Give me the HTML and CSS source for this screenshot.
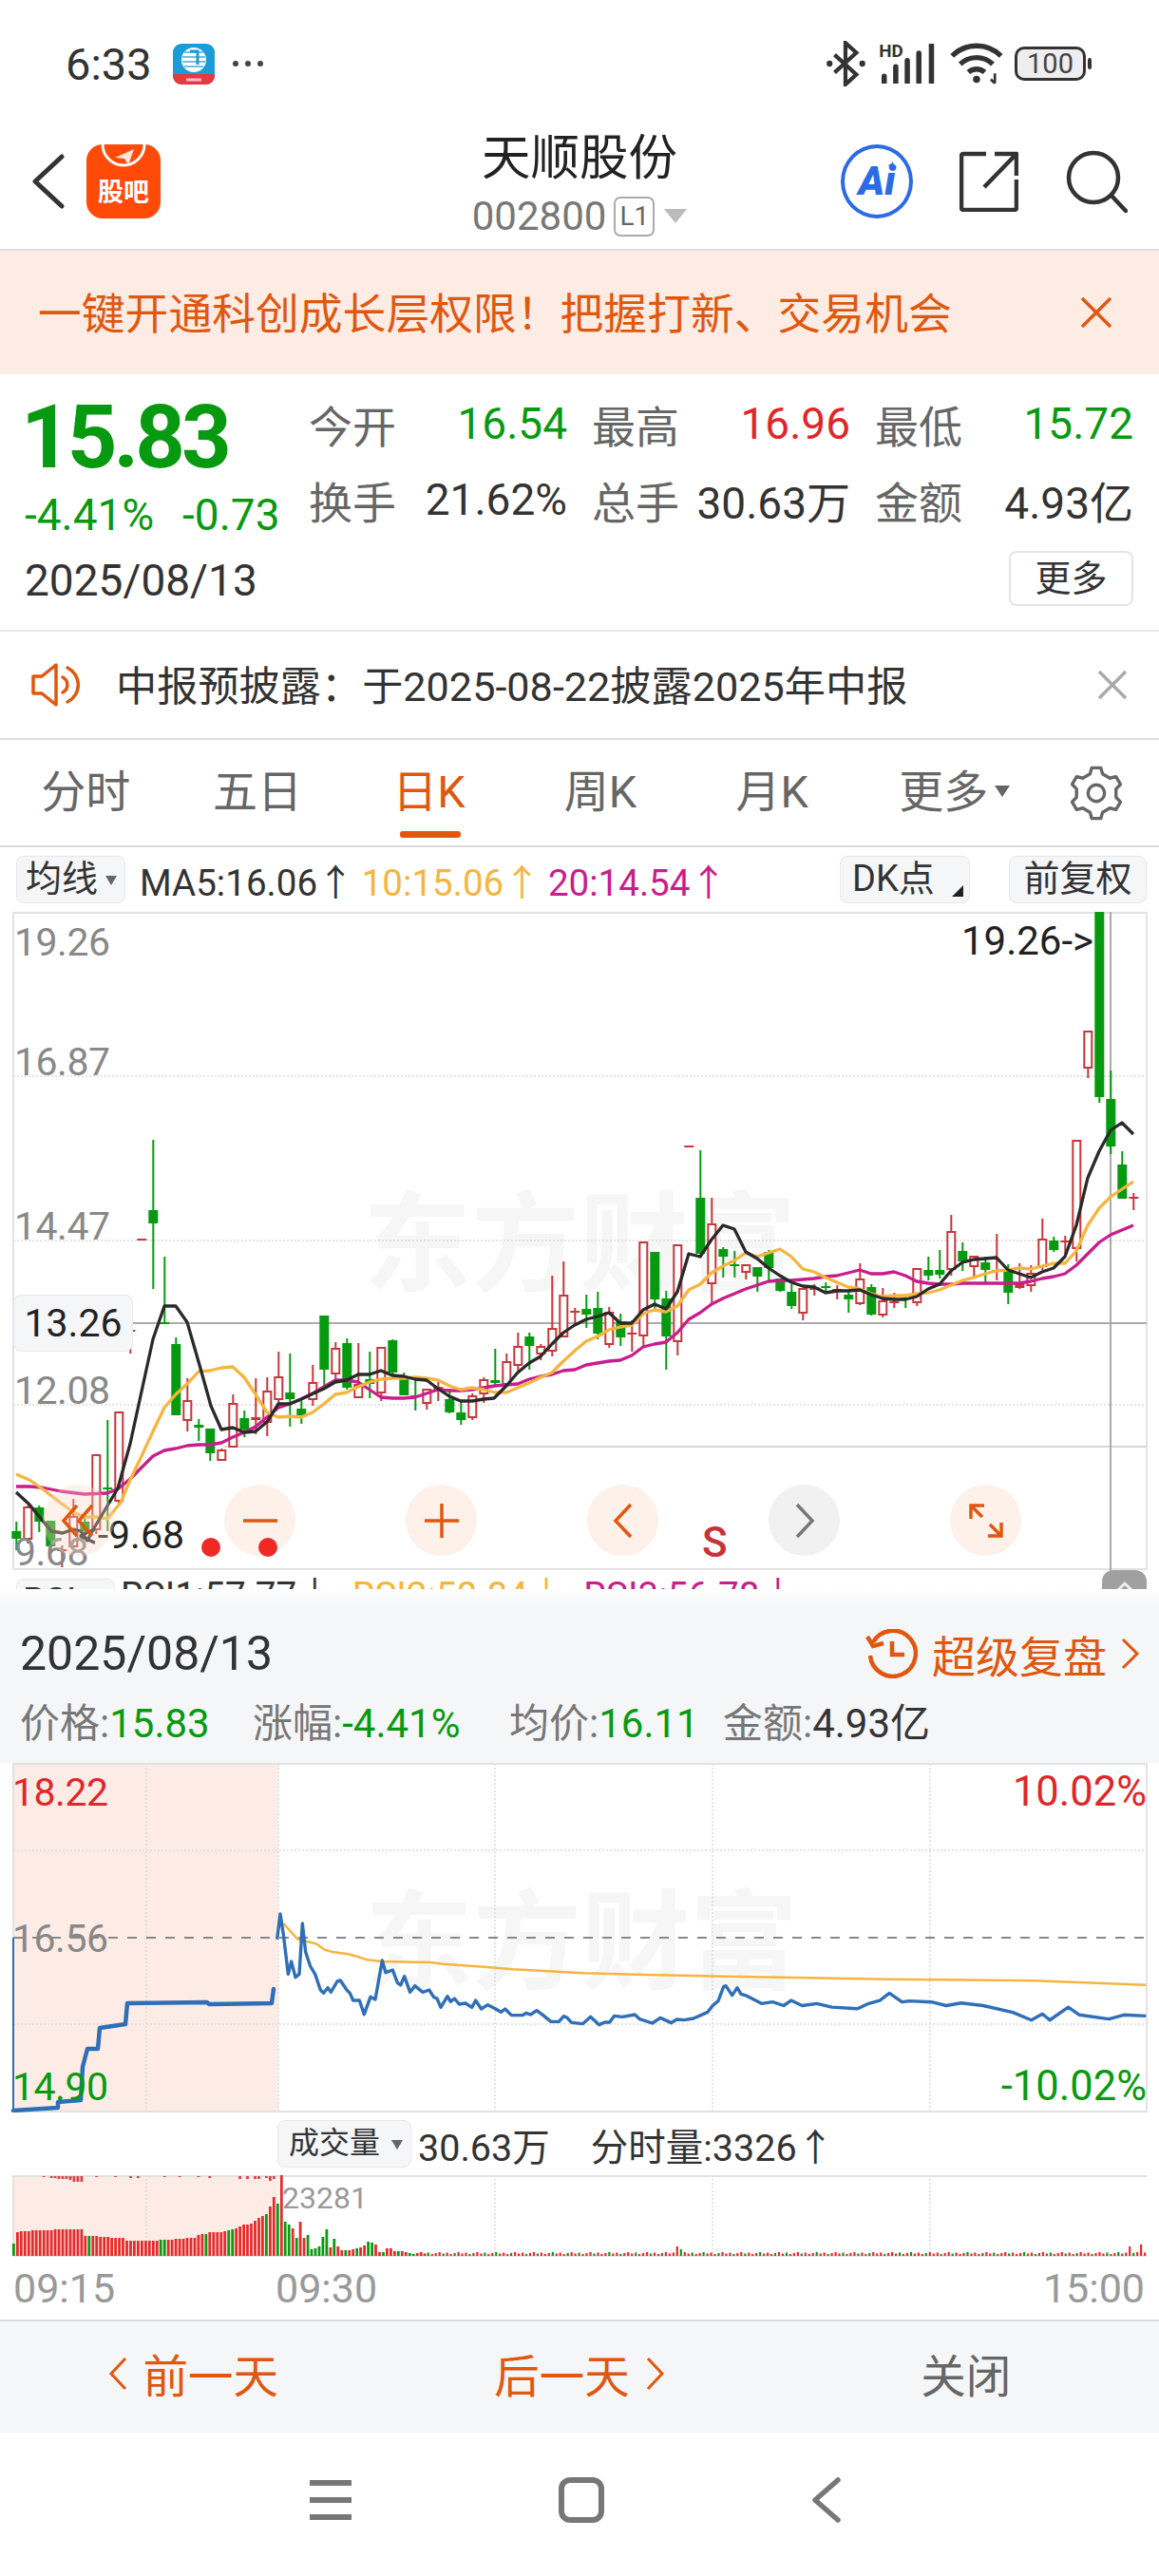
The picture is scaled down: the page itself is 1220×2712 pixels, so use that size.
FILE: index.html
```html
<!DOCTYPE html>
<html lang="zh-CN">
  <head>
    <meta charset="UTF-8" />
    <meta name="viewport" content="width=device-width, initial-scale=1.0" />
    <title>天顺股份 002800</title>
    <link rel="stylesheet" href="styles.css">
  </head>
  <body>
    <!-- Status bar -->
    <div class="status-bar">
      <span class="clock">6:33</span>
      <svg class="app-icon" width="44" height="43" viewBox="0 0 44 43">
        <rect width="44" height="43" rx="9" fill="#1b9bd8" />
        <path d="M0 32h44v2a9 9 0 0 1-9 9H9a9 9 0 0 1-9-9z" fill="#e8393f" />
        <ellipse cx="22" cy="17" rx="13" ry="13" fill="#fff" />
        <path d="M12 9h20M10 14h24M10 19h24M12 24h20" stroke="#6cc0e8" stroke-width="2" />
        <path d="M18 8h8v14" fill="none" stroke="#1b9bd8" stroke-width="3" />
        <path d="M14 38h16" stroke="#fbd" stroke-width="3" />
      </svg>
      <span class="more-dots"><i></i><i></i><i></i></span>
      <div class="status-right">
        <svg class="sb-bt" width="46" height="48" viewBox="0 0 44 46" fill="none" stroke="#333" stroke-width="4">
          <path d="M10 14l22 20-11 10V2l11 10-22 20" />
          <circle cx="5" cy="23" r="3" fill="#333" stroke="none" />
          <circle cx="38" cy="23" r="3" fill="#333" stroke="none" />
        </svg>
        <svg class="sb-signal" width="59" height="42" viewBox="0 0 53 38">
          <text x="0" y="13" class="hd-text">HD</text>
          <path d="M5 37v-6M16 37V22M27 37V16M38 37V9M50 37V1" stroke="#333" stroke-width="5" stroke-linecap="round" />
        </svg>
        <svg class="sb-wifi" width="60" height="45" viewBox="0 0 56 42" fill="none" stroke="#333" stroke-width="5">
          <path d="M3 13a34 34 0 0 1 48 0M11 21a23 23 0 0 1 32 0M19 29a12 12 0 0 1 16 0" />
          <circle cx="27" cy="36" r="3.5" fill="#333" stroke="none" />
          <path d="M45 30v10M41 36l4 4" stroke-width="2.5" />
        </svg>
        <div class="battery"><span>100</span></div>
      </div>
    </div>

    <!-- Top nav -->
    <div class="top-nav">
      <div class="nav-left">
        <svg width="36" height="58" viewBox="0 0 36 58" fill="none" stroke="#333" stroke-width="5" stroke-linecap="round" stroke-linejoin="round">
          <path d="M32 3L4 29l28 26" />
        </svg>
        <div class="guba">
          <svg width="78" height="34" viewBox="0 0 78 34">
            <path d="M17 0a22 22 0 0 0 44 0" fill="none" stroke="#fff" stroke-width="3" />
            <path d="M30 14l20-9-6 17-4-7z" fill="#fff" opacity=".85" />
          </svg>
          <span>股吧</span>
        </div>
      </div>
      <div class="nav-title">
        <div class="stock-name">天顺股份</div>
        <div class="stock-code">
          <span>002800</span><span class="level-badge">L1</span><i class="caret-gray"></i>
        </div>
      </div>
      <div class="nav-right">
        <div class="ai-btn">Ai<i>✦</i></div>
        <svg width="62" height="64" viewBox="0 0 62 64" fill="none" stroke="#333" stroke-width="4.5" stroke-linejoin="round">
          <path d="M28 3H4a2 2 0 0 0-2 2v55a2 2 0 0 0 2 2h54a2 2 0 0 0 2-2V30" />
          <path d="M26 38L59 4M37 3h23v23" />
        </svg>
        <svg width="66" height="66" viewBox="0 0 66 66" fill="none" stroke="#333" stroke-width="4.5" stroke-linecap="round">
          <circle cx="30" cy="29" r="26" />
          <path d="M49 48l15 16" />
        </svg>
      </div>
    </div>

    <!-- Orange promo banner -->
    <div class="promo">
      <span>一键开通科创成长层权限！把握打新、交易机会</span>
      <svg width="34" height="34" viewBox="0 0 34 34" stroke="#e0570f" stroke-width="3.5" fill="none"><path d="M2 2l30 30M32 2L2 32" /></svg>
    </div>

    <!-- Quote summary -->
    <div class="quote">
      <div class="quote-left">
        <div class="price">15.83</div>
        <div class="change"><span>-4.41%</span><span>-0.73</span></div>
        <div class="quote-date">2025/08/13</div>
      </div>
      <div class="quote-right">
        <div class="stats">
          <div class="stat"><label>今开</label><b class="green">16.54</b></div>
          <div class="stat"><label>最高</label><b class="red">16.96</b></div>
          <div class="stat"><label>最低</label><b class="green">15.72</b></div>
          <div class="stat"><label>换手</label><b>21.62%</b></div>
          <div class="stat"><label>总手</label><b>30.63万</b></div>
          <div class="stat"><label>金额</label><b>4.93亿</b></div>
        </div>
        <div class="more-btn">更多</div>
      </div>
    </div>

    <!-- Notice -->
    <div class="notice">
      <svg width="54" height="46" viewBox="0 0 54 46" fill="none" stroke="#e0570f" stroke-width="3.5" stroke-linejoin="round" stroke-linecap="round">
        <path d="M2 14h9L26 2v42L11 32H2z" />
        <path d="M33 15a9 9 0 0 1 0 16M38 5a20 20 0 0 1 0 36" />
      </svg>
      <span class="notice-text">中报预披露：于2025-08-22披露2025年中报</span>
      <svg width="32" height="32" viewBox="0 0 32 32" stroke="#aaa" stroke-width="3.5" fill="none"><path d="M2 2l28 28M30 2L2 30" /></svg>
    </div>

    <!-- Period tabs -->
    <div class="tabs">
      <div class="tab">分时</div>
      <div class="tab">五日</div>
      <div class="tab active">日K</div>
      <div class="tab">周K</div>
      <div class="tab">月K</div>
      <div class="tab">更多<i class="tab-caret"></i></div>
      <svg class="gear" width="58" height="60" viewBox="0 0 60 60" fill="none" stroke="#666" stroke-width="3.5" stroke-linejoin="round">
        <path d="M25.1 2.4H34.9L36.8 9.1 44.7 13.7 51.4 12 56.3 20.4 51.5 25.4V34.6L56.3 39.6 51.4 48 44.7 46.3 36.8 50.9 34.9 57.6H25.1L23.2 50.9 15.3 46.3 8.6 48 3.7 39.6 8.5 34.6V25.4L3.7 20.4 8.6 12 15.3 13.7 23.2 9.1z" />
        <circle cx="30" cy="30" r="9" />
      </svg>
    </div>

    <!-- MA legend -->
    <div class="ma-row">
      <div class="chip ma-chip">均线<i class="chip-caret"></i></div>
      <span>MA5:16.06↑</span>
      <span class="ma10">10:15.06↑</span>
      <span class="ma20">20:14.54↑</span>
      <div class="ma-right">
        <div class="chip dk-chip">DK点<i class="corner-caret"></i></div>
        <div class="chip fq-chip">前复权</div>
      </div>
    </div>

    <!-- Daily K chart -->
    <div class="kline">
      <svg class="chart-svg" width="1220" height="713" viewBox="0 960 1220 713">
        <text x="610" y="1350" class="watermark">东方财富</text>
        <path d="M14 1133H1207M14 1306H1207M14 1479H1207" class="grid-dots" />
        <path d="M14 961H1207V1652H14z" class="frame" />
        <path d="M235 1523H1207" class="row-line" />
        <path d="M140 1393H1207M1169 960V1673" class="cross" />
        <g id="candles"></g>
        <path id="ma20" class="ma-line" stroke="#c81e8c" />
        <path id="ma10" class="ma-line" stroke="#f5b53f" />
        <path id="ma5" class="ma-line" stroke="#2a2a2a" />
        <text x="15" y="1006" class="axis-gray">19.26</text>
        <text x="15" y="1132" class="axis-gray">16.87</text>
        <text x="15" y="1305" class="axis-gray">14.47</text>
        <text x="15" y="1478" class="axis-gray">12.08</text>
        <text x="15" y="1648" class="axis-gray">9.68</text>
        <text x="1151" y="1005" class="axis-dark end peak-mark">19.26-&gt;</text>
        <text x="194" y="1630" class="axis-dark end">&lt;-9.68</text>
        <text x="739" y="1639" class="sell-mark">S</text>
      </svg>
      <div class="cross-label">13.26</div>

      <div class="chart-btns">
        <div class="round-btn"><svg width="40" height="40" viewBox="0 0 40 40" fill="none" stroke="#e0570f" stroke-width="3.5"><path d="M18 4L4 20l14 16M34 4L20 20l14 16" /></svg></div>
        <div class="round-btn"><svg width="40" height="40" viewBox="0 0 40 40" stroke="#e0570f" stroke-width="3.5"><path d="M2 20h36" /></svg></div>
        <div class="round-btn"><svg width="40" height="40" viewBox="0 0 40 40" stroke="#e0570f" stroke-width="3.5"><path d="M2 20h36M20 2v36" /></svg></div>
        <div class="round-btn"><svg width="40" height="40" viewBox="0 0 40 40" fill="none" stroke="#e0570f" stroke-width="3.5"><path d="M28 3L12 20l16 17" /></svg></div>
        <div class="round-btn off"><svg width="40" height="40" viewBox="0 0 40 40" fill="none" stroke="#777" stroke-width="3.5"><path d="M12 3l16 17-16 17" /></svg></div>
        <div class="round-btn"><svg width="40" height="40" viewBox="0 0 40 40" fill="none" stroke="#e0570f" stroke-width="3.5"><path d="M4 18V4h14M4 4l12 12M36 22v14H22M36 36L24 24" /></svg></div>
      </div>
      <i class="trade-dot dot-a"></i>
      <i class="trade-dot dot-b"></i>

      <div class="rsi-row">
        <div class="chip rsi-chip">RSI<i class="chip-caret"></i></div>
        <span>RSI1:57.77↓</span>
        <span class="ma10">RSI2:58.84↓</span>
        <span class="ma20">RSI3:56.78↓</span>
      </div>
      <div class="collapse-tab">
        <svg width="24" height="14" viewBox="0 0 24 14" fill="none" stroke="#eee" stroke-width="3"><path d="M3 12L12 3l9 9" /></svg>
      </div>
    </div>

    <!-- Replay sheet -->
    <div class="sheet-fade"></div>
    <div class="sheet-head">
      <div class="sheet-title">
        <span class="sheet-date">2025/08/13</span>
        <div class="replay-link">
          <svg width="56" height="52" viewBox="0 0 56 52" fill="none" stroke="#e0570f" stroke-width="4.5">
            <path d="M9 14a24 24 0 1 1-3 14" />
            <path d="M3 8l6 10 11-3" />
            <path d="M29 13v14h13" />
          </svg>
          <span>超级复盘</span>
          <svg width="20" height="34" viewBox="0 0 20 34" fill="none" stroke="#e0570f" stroke-width="3"><path d="M2 2l15 15L2 32" /></svg>
        </div>
      </div>
      <div class="sheet-info">
        <span>价格:<b class="green">15.83</b></span>
        <span>涨幅:<b class="green">-4.41%</b></span>
        <span>均价:<b class="green">16.11</b></span>
        <span>金额:<b>4.93亿</b></span>
      </div>
    </div>

    <!-- Intraday chart -->
    <div class="intraday">
      <svg class="chart-svg" width="1220" height="368" viewBox="0 1856 1220 368">
        <rect x="14" y="1857" width="279" height="366" fill="#fdece5" />
        <text x="612" y="2085" class="watermark">东方财富</text>
        <path d="M14 1948H1207M14 2131H1207M154 1857V2223M293 1857V2223M521 1857V2223M750 1857V2223M979 1857V2223" class="grid-dots" />
        <path d="M14 1857H1207V2223H14z" class="frame" />
        <path d="M14 2040H1207" class="dash-line" />
        <path id="avg-line" class="avg-line" />
        <path d="M14 2040V2222" class="auction-thin" />
        <path id="auction-line" class="auction-line" />
        <path id="price-line" class="price-line" />
        <text x="13" y="1901" class="axis-red">18.22</text>
        <text x="1207" y="1901" class="axis-red end pct">10.02%</text>
        <text x="13" y="2055" class="axis-gray">16.56</text>
        <text x="13" y="2211" class="axis-green">14.90</text>
        <text x="1207" y="2211" class="axis-green end pct">-10.02%</text>
      </svg>
    </div>

    <!-- Volume -->
    <div class="vol-row">
      <div class="chip vol-chip">成交量<i class="chip-caret"></i></div>
      <span class="vol-total">30.63万</span>
      <span>分时量:3326↑</span>
    </div>
    <div class="vol-chart">
      <svg class="chart-svg" width="1220" height="88" viewBox="0 2290 1220 88">
        <rect x="14" y="2290" width="279" height="85" fill="#fdece5" />
        <path d="M154 2290V2375M521 2290V2375M750 2290V2375M979 2290V2375" class="grid-dots" />
        <path d="M14 2291H1207M14 2290V2375" class="frame" />
        <path d="M14 2375H1207" class="vol-base" />
        <g id="vol-bars"></g>
        <text x="297" y="2325" class="vol-peak">23281</text>
      </svg>
    </div>
    <div class="times">
      <span>09:15</span>
      <span>09:30</span>
      <span>15:00</span>
    </div>

    <!-- Sheet footer -->
    <div class="sheet-foot">
      <div class="foot-btn on">
        <svg width="20" height="36" viewBox="0 0 20 36" fill="none" stroke="#e0570f" stroke-width="3"><path d="M18 2L3 18l15 16" /></svg>
        <span>前一天</span>
      </div>
      <div class="foot-btn on">
        <span>后一天</span>
        <svg width="20" height="36" viewBox="0 0 20 36" fill="none" stroke="#e0570f" stroke-width="3"><path d="M2 2l15 16L2 34" /></svg>
      </div>
      <div class="foot-btn">关闭</div>
    </div>

    <!-- System nav -->
    <div class="sys-nav">
      <svg width="44" height="44" viewBox="0 0 44 44" stroke="#777" stroke-width="6"><path d="M0 4h44M0 22h44M0 40h44" /></svg>
      <svg width="48" height="48" viewBox="0 0 48 48" fill="none" stroke="#777" stroke-width="6"><rect x="3" y="3" width="42" height="42" rx="9" /></svg>
      <svg width="32" height="48" viewBox="0 0 32 48" fill="none" stroke="#777" stroke-width="5.5" stroke-linecap="round" stroke-linejoin="round"><path d="M28 3L4 24l24 21" /></svg>
    </div>

    <script src="chart.js"></script>
  </body>
</html>
```

FILE: styles.css
```css
/* General */
* {
  box-sizing: border-box;
}

body {
  margin: 0;
  width: 1220px;
  height: 2712px;
  overflow: hidden;
  background: #fff;
  color: #333;
  font-family: Roboto, "Noto Sans CJK SC", sans-serif;
}

.green {
  color: #079a10;
}

.red {
  color: #e0262a;
}

/* Status bar */
.status-bar {
  display: flex;
  align-items: center;
  height: 120px;
  padding: 14px 77px 0 69px;
}

.clock {
  font-size: 47px;
  color: #333;
}

.app-icon {
  margin-left: 22px;
}

.more-dots {
  display: flex;
  gap: 7px;
  margin-left: 19px;
}

.more-dots i {
  width: 6px;
  height: 6px;
  border-radius: 50%;
  background: #444;
}

.status-right {
  display: flex;
  align-items: center;
  margin-left: auto;
}

.sb-bt {
  margin-right: 11px;
}

.sb-signal {
  margin-right: 15px;
}

.sb-wifi {
  margin-right: 9px;
}

.hd-text {
  font-size: 17px;
  font-weight: 700;
  fill: #333;
}

.battery {
  position: relative;
  display: flex;
  align-items: center;
  justify-content: center;
  width: 75px;
  height: 36px;
  border: 3.5px solid #333;
  border-radius: 10px;
  background: #eee;
  font-size: 29px;
  color: #444;
}

.battery::after {
  content: "";
  position: absolute;
  right: -9px;
  top: 9px;
  width: 4px;
  height: 12px;
  border-radius: 2px;
  background: #333;
}

/* Top nav */
.top-nav {
  display: grid;
  grid-template-columns: 1fr auto 1fr;
  align-items: center;
  height: 144px;
  padding: 0 33px;
  border-bottom: 2px solid #ddd;
}

.nav-left {
  display: flex;
  align-items: center;
  gap: 22px;
}

.guba {
  display: flex;
  flex-direction: column;
  align-items: center;
  width: 78px;
  height: 78px;
  overflow: hidden;
  border-radius: 17px;
  background: #ff4a08;
}

.guba span {
  margin-top: 1px;
  font-size: 27px;
  line-height: 32px;
  font-weight: 700;
  color: #fff;
}

.nav-title {
  padding-top: 5px;
  text-align: center;
}

.stock-name {
  height: 60px;
  font-size: 51.5px;
  line-height: 60px;
  color: #222;
}

.stock-code {
  display: flex;
  align-items: center;
  margin-top: 8px;
  font-size: 42px;
  line-height: 46px;
  color: #777;
}

.level-badge {
  margin-left: 8px;
  padding: 0 4px;
  border: 2px solid #aaa;
  border-radius: 7px;
  font-size: 28px;
  line-height: 38px;
  color: #666;
}

.caret-gray {
  width: 0;
  height: 0;
  margin-left: 10px;
  border-style: solid;
  border-width: 15px 12px 0;
  border-color: #bbb transparent transparent;
}

.nav-right {
  display: flex;
  align-items: center;
  justify-content: flex-end;
  gap: 49px;
}

.ai-btn {
  position: relative;
  width: 76px;
  height: 78px;
  border: 4px solid #2b6be4;
  border-radius: 50%;
  text-align: center;
  font-size: 42px;
  line-height: 70px;
  font-weight: 900;
  font-style: italic;
  color: #2b6be4;
}

.ai-btn i {
  position: absolute;
  top: 13px;
  right: 15px;
  font-size: 11px;
  line-height: 12px;
}

/* Promo banner */
.promo {
  display: flex;
  align-items: center;
  justify-content: space-between;
  height: 130px;
  padding: 0 49px 0 40px;
  background: #fcece4;
  font-size: 45.8px;
  color: #e0570f;
}

.promo span {
  margin-bottom: 4px;
}

/* Quote */
.quote {
  display: flex;
  height: 271px;
  border-bottom: 2px solid #e8e8e8;
}

.quote-left {
  width: 327px;
  padding: 20px 0 0 26px;
}

.price {
  margin-left: -4px;
  font-size: 92px;
  line-height: 94px;
  font-weight: 700;
  letter-spacing: -4px;
  color: #079a10;
}

.change {
  display: flex;
  gap: 30px;
  margin-top: 1px;
  font-size: 46px;
  line-height: 66px;
  color: #079a10;
}

.quote-date {
  margin-top: -1px;
  font-size: 46px;
  line-height: 74px;
  color: #333;
}

.quote-right {
  flex: 1;
  padding: 12px 27px 0 0;
}

.stats {
  display: grid;
  grid-template-columns: repeat(3, 270px);
  grid-auto-rows: 80px;
  column-gap: 28px;
  font-size: 46px;
}

.stat {
  display: flex;
  align-items: center;
  justify-content: space-between;
}

.stat label {
  margin-left: -2px;
  color: #666;
}

.stat b {
  font-weight: 400;
}

.more-btn {
  width: 131px;
  height: 58px;
  margin: 14px 0 0 auto;
  border: 2px solid #e4e4e4;
  border-radius: 8px;
  text-align: center;
  font-size: 38px;
  line-height: 54px;
  color: #333;
}

/* Notice */
.notice {
  display: flex;
  align-items: center;
  height: 114px;
  padding: 0 33px;
  border-bottom: 2px solid #ddd;
}

.notice-text {
  flex: 1;
  margin: 0 0 5px 35px;
  font-size: 43.2px;
  color: #333;
}

/* Tabs */
.tabs {
  display: flex;
  align-items: center;
  height: 113px;
  padding-bottom: 1px;
  border-bottom: 2px solid #ddd;
  font-size: 47px;
  color: #666;
}

.tab {
  position: relative;
  flex: 0 0 180.6px;
  height: 60px;
  line-height: 60px;
  text-align: center;
}

.tab.active {
  color: #e0570f;
}

.tab.active::after {
  content: "";
  position: absolute;
  left: 60px;
  bottom: -18px;
  width: 64px;
  height: 7px;
  border-radius: 3px;
  background: #e0570f;
}

.tab-caret {
  position: absolute;
  top: 23px;
  right: 21px;
  width: 0;
  height: 0;
  border-style: solid;
  border-width: 12px 8px 0;
  border-color: #666 transparent transparent;
}

.gear {
  margin: 1px 0 0 41px;
}

/* Chips */
.chip {
  position: relative;
  height: 50px;
  border: 1px solid #e6e8ec;
  border-radius: 8px;
  background: #f5f6f8;
  font-size: 38px;
  line-height: 47px;
  color: #333;
}

.chip-caret {
  position: absolute;
  top: 20px;
  right: 8px;
  width: 0;
  height: 0;
  border-style: solid;
  border-width: 10px 6px 0;
  border-color: #666 transparent transparent;
}

.corner-caret {
  position: absolute;
  right: 6px;
  bottom: 6px;
  width: 0;
  height: 0;
  border-style: solid;
  border-width: 0 0 12px 12px;
  border-color: transparent transparent #222;
}

/* MA legend */
.ma-row {
  display: flex;
  align-items: center;
  gap: 8px;
  height: 68px;
  padding: 0 13px 0 17px;
  font-size: 38.6px;
  color: #333;
}

.ma-chip {
  width: 115px;
  margin-right: 7px;
  padding-left: 9px;
}

.ma10 {
  color: #f5b53f;
}

.ma20 {
  color: #c81e8c;
}

.ma-right {
  display: flex;
  gap: 41px;
  margin-left: auto;
}

.dk-chip {
  width: 137px;
  padding-left: 12px;
}

.fq-chip {
  width: 145px;
  text-align: center;
}

/* Charts */
.chart-svg {
  display: block;
}

.kline {
  position: relative;
  height: 713px;
  overflow: hidden;
}

.intraday {
  height: 368px;
}

.watermark {
  font-size: 114px;
  font-weight: 700;
  fill: #f6f6f6;
  text-anchor: middle;
}

.grid-dots {
  fill: none;
  stroke: #dcdcdc;
  stroke-width: 1.5;
  stroke-dasharray: 2 2;
}

.frame {
  fill: none;
  stroke: #e2e2e2;
  stroke-width: 2;
}

.row-line {
  stroke: #d6d6de;
  stroke-width: 2;
}

.cross {
  fill: none;
  stroke: #aaa;
  stroke-width: 2;
}

.ma-line {
  fill: none;
  stroke-width: 3.3;
  stroke-linejoin: round;
}

.axis-gray,
.axis-dark,
.axis-red,
.axis-green {
  font-size: 41px;
  letter-spacing: -0.5px;
}

.axis-gray {
  fill: #888;
}

.axis-dark {
  fill: #222;
  letter-spacing: 0;
}

.peak-mark {
  font-size: 42px;
}

.axis-red {
  fill: #e0262a;
}

.axis-green {
  fill: #079a10;
}

.end {
  text-anchor: end;
}

.pct {
  font-size: 43.5px;
  letter-spacing: 0;
}

.sell-mark {
  font-size: 44px;
  font-weight: 500;
  fill: #c8333a;
}

.cross-label {
  position: absolute;
  top: 403px;
  left: 14px;
  width: 126px;
  height: 60px;
  border: 1px solid #e6e8ec;
  border-radius: 8px;
  background: #f5f6f8;
  text-align: center;
  font-size: 41px;
  line-height: 58px;
  color: #222;
}

.chart-btns {
  position: absolute;
  top: 603px;
  left: 45px;
  display: flex;
  gap: 116px;
}

.round-btn {
  display: flex;
  align-items: center;
  justify-content: center;
  width: 75px;
  height: 75px;
  border-radius: 50%;
  background: rgba(250, 215, 195, 0.35);
}

.round-btn.off {
  background: rgba(200, 200, 200, 0.25);
}

.trade-dot {
  position: absolute;
  top: 659px;
  width: 20px;
  height: 20px;
  border-radius: 50%;
  background: #ee2a24;
}

.dot-a {
  left: 212px;
}

.dot-b {
  left: 272px;
}

.rsi-row {
  position: absolute;
  top: 702px;
  left: 17px;
  display: flex;
  align-items: flex-start;
  gap: 20px;
  font-size: 38.6px;
  line-height: 36px;
  color: #333;
}

.rsi-chip {
  width: 104px;
  margin-right: -14px;
  padding-left: 6px;
}

.collapse-tab {
  position: absolute;
  top: 693px;
  right: 13px;
  display: flex;
  justify-content: center;
  width: 47px;
  height: 30px;
  padding-top: 11px;
  border-radius: 12px 12px 0 0;
  background: #a0a0a0;
}

/* Replay sheet */
.sheet-fade {
  height: 19px;
  background: linear-gradient(#fff, #f5f6f8);
}

.sheet-head {
  height: 164px;
  padding: 0 20px 0 21px;
  background: #f5f6f8;
}

.sheet-title {
  display: flex;
  align-items: center;
  justify-content: space-between;
  height: 98px;
}

.sheet-date {
  font-size: 50px;
  color: #333;
}

.replay-link {
  display: flex;
  align-items: center;
  gap: 15px;
  font-size: 46px;
  color: #e0570f;
}

.sheet-info {
  display: grid;
  grid-template-columns: 245px 270px 225px auto;
  font-size: 42px;
  line-height: 50px;
  color: #777;
}

.sheet-info span {
  white-space: nowrap;
}

.sheet-info b {
  font-weight: 400;
}

.sheet-info span:last-child b {
  color: #333;
}

.dash-line {
  fill: none;
  stroke: #888;
  stroke-width: 2;
  stroke-dasharray: 10 10;
}

.avg-line {
  fill: none;
  stroke: #f5b53f;
  stroke-width: 2.5;
}

.auction-thin {
  stroke: #2f6fb8;
  stroke-width: 2;
}

.auction-line {
  fill: none;
  stroke: #2f6fb8;
  stroke-width: 4.5;
  stroke-linejoin: round;
  stroke-linecap: round;
}

.price-line {
  fill: none;
  stroke: #2f6fb8;
  stroke-width: 3.4;
  stroke-linejoin: round;
}

/* Volume */
.vol-row {
  display: flex;
  align-items: center;
  gap: 43px;
  height: 66px;
  padding-left: 292px;
  font-size: 39.5px;
  color: #333;
}

.vol-chip {
  width: 141px;
  margin-right: -36px;
  padding-left: 11px;
  font-size: 32px;
}

.vol-chart {
  height: 88px;
}

.vol-base {
  stroke: #ccc;
  stroke-width: 1;
}

.vol-peak {
  font-size: 32px;
  fill: #999;
}

.times {
  display: flex;
  align-items: center;
  height: 66px;
  padding: 0 15px 2px 14px;
  border-bottom: 2px solid #ddd;
  font-size: 43px;
  color: #999;
}

.times span:first-child {
  width: 276px;
}

.times span:last-child {
  margin-left: auto;
}

.sheet-foot {
  display: grid;
  grid-template-columns: repeat(3, 1fr);
  height: 117px;
  padding-bottom: 8px;
  background: #f5f6f8;
  font-size: 47.5px;
  color: #666;
}

.foot-btn {
  display: flex;
  align-items: center;
  justify-content: center;
  gap: 17px;
}

.foot-btn.on {
  color: #e0570f;
}

.sys-nav {
  display: flex;
  align-items: center;
  justify-content: center;
  gap: 218px;
  height: 151px;
  padding: 0 9px 10px 0;
}
```

FILE: chart.js
```js
// [colour, wickTop, bodyTop, bodyBottom, wickBottom] in page pixels
const candles = [
  ["g", 1602, 1612, 1620, 1632], ["r", 1585, 1587, 1620, 1625], ["g", 1585, 1587, 1602, 1613],
  ["g", 1601, 1601, 1628, 1635], ["r", 1627, 1631, 1633, 1650], ["r", 1578, 1597, 1628, 1628],
  ["g", 1598, 1602, 1612, 1618], ["r", 1532, 1532, 1610, 1615], ["g", 1495, 1566, 1568, 1612],
  ["r", 1487, 1487, 1580, 1585], ["r", 1398, 1400, 1402, 1425], ["r", 1304, 1304, 1306, 1306],
  ["g", 1200, 1274, 1288, 1357], ["g", 1323, 1392, 1394, 1394], ["g", 1408, 1415, 1490, 1490],
  ["r", 1451, 1475, 1495, 1507], ["g", 1494, 1500, 1503, 1517], ["g", 1504, 1504, 1530, 1538],
  ["r", 1525, 1527, 1537, 1537], ["r", 1468, 1478, 1523, 1523], ["g", 1485, 1493, 1505, 1513],
  ["r", 1451, 1492, 1495, 1510], ["r", 1450, 1465, 1497, 1512], ["r", 1423, 1450, 1473, 1480],
  ["g", 1425, 1466, 1473, 1502], ["g", 1475, 1483, 1490, 1499], ["r", 1437, 1456, 1473, 1480],
  ["g", 1385, 1385, 1442, 1460], ["r", 1413, 1420, 1446, 1453], ["g", 1409, 1414, 1461, 1463],
  ["r", 1414, 1458, 1471, 1472], ["g", 1423, 1452, 1457, 1472], ["r", 1419, 1419, 1466, 1475],
  ["g", 1410, 1411, 1445, 1447], ["g", 1445, 1452, 1469, 1469], ["g", 1453, 1469, 1471, 1485],
  ["r", 1463, 1463, 1477, 1484], ["r", 1455, 1460, 1464, 1475], ["g", 1462, 1473, 1487, 1488],
  ["g", 1476, 1487, 1495, 1500], ["r", 1467, 1470, 1492, 1495], ["r", 1450, 1453, 1467, 1477],
  ["g", 1420, 1453, 1456, 1460], ["r", 1425, 1434, 1457, 1457], ["r", 1403, 1418, 1437, 1443],
  ["g", 1403, 1407, 1417, 1442], ["r", 1415, 1418, 1425, 1432], ["r", 1343, 1399, 1422, 1428],
  ["r", 1328, 1364, 1407, 1407], ["r", 1377, 1380, 1382, 1393], ["g", 1363, 1378, 1384, 1398],
  ["g", 1360, 1377, 1404, 1410], ["r", 1376, 1382, 1415, 1419], ["g", 1383, 1391, 1408, 1417],
  ["r", 1390, 1403, 1405, 1423], ["r", 1307, 1308, 1406, 1419], ["g", 1318, 1318, 1368, 1380],
  ["g", 1359, 1367, 1407, 1442], ["r", 1311, 1311, 1412, 1427], ["r", 1206, 1206, 1208, 1208],
  ["g", 1211, 1261, 1320, 1320], ["r", 1261, 1289, 1351, 1372], ["g", 1313, 1315, 1323, 1345],
  ["g", 1317, 1331, 1333, 1345], ["r", 1332, 1332, 1339, 1347], ["g", 1334, 1334, 1344, 1360],
  ["g", 1316, 1318, 1335, 1348], ["g", 1346, 1346, 1359, 1360], ["g", 1352, 1360, 1375, 1378],
  ["r", 1357, 1357, 1382, 1390], ["r", 1352, 1355, 1358, 1364], ["g", 1350, 1354, 1356, 1360],
  ["r", 1353, 1357, 1358, 1368], ["g", 1360, 1363, 1368, 1382], ["r", 1330, 1347, 1372, 1374],
  ["g", 1352, 1355, 1384, 1385], ["r", 1356, 1370, 1384, 1387], ["r", 1361, 1370, 1372, 1377],
  ["g", 1365, 1366, 1368, 1377], ["r", 1336, 1336, 1371, 1375], ["g", 1323, 1337, 1343, 1348],
  ["g", 1316, 1337, 1342, 1346], ["r", 1279, 1297, 1336, 1343], ["g", 1308, 1317, 1328, 1338],
  ["r", 1323, 1323, 1333, 1345], ["g", 1323, 1329, 1337, 1352], ["r", 1299, 1337, 1339, 1348],
  ["g", 1331, 1338, 1361, 1373], ["r", 1330, 1352, 1356, 1357], ["r", 1332, 1341, 1353, 1360],
  ["r", 1283, 1305, 1333, 1337], ["g", 1302, 1306, 1316, 1318], ["r", 1301, 1306, 1308, 1320],
  ["r", 1201, 1201, 1314, 1328], ["r", 1086, 1086, 1124, 1135], ["g", 960, 960, 1155, 1161],
  ["g", 1127, 1157, 1207, 1215], ["g", 1212, 1226, 1262, 1262], ["r", 1256, 1260, 1262, 1274]
];

const ma5 = [17,1571,31,1584,44,1600,54,1612,66,1614,77,1610,85,1612,92,1622,97,1612,112,1587,124,1567,137,1520,161,1410,173,1375,185,1375,197,1392,210,1437,222,1480,233,1505,245,1503,257,1508,269,1507,281,1497,293,1478,305,1478,317,1473,330,1467,341,1462,353,1455,365,1453,377,1447,389,1447,401,1443,413,1448,425,1449,437,1452,449,1453,461,1462,473,1470,485,1475,497,1475,509,1473,520,1472,533,1459,545,1445,557,1435,569,1428,581,1415,593,1403,605,1395,617,1389,629,1386,641,1382,653,1393,665,1393,677,1379,689,1373,701,1378,713,1360,725,1320,737,1323,749,1305,761,1290,773,1294,785,1318,797,1325,809,1335,821,1343,833,1350,845,1354,857,1355,869,1361,881,1359,893,1359,905,1358,917,1363,929,1367,941,1368,953,1368,965,1365,977,1357,989,1352,1001,1338,1013,1329,1025,1326,1037,1325,1049,1324,1061,1337,1073,1341,1085,1345,1097,1339,1109,1335,1121,1323,1133,1290,1145,1240,1157,1212,1169,1190,1181,1182,1193,1194];
const ma10 = [17,1552,31,1558,44,1567,57,1577,77,1592,89,1597,101,1597,113,1599,127,1582,137,1558,149,1533,161,1507,173,1482,185,1468,197,1457,209,1444,221,1443,233,1440,245,1439,257,1450,269,1468,281,1487,293,1492,305,1491,317,1492,329,1487,341,1478,353,1468,365,1466,377,1460,389,1455,401,1452,413,1451,425,1451,437,1450,449,1451,461,1453,473,1459,485,1463,497,1461,509,1463,521,1466,533,1466,545,1461,557,1456,569,1450,581,1445,593,1433,605,1422,617,1412,629,1407,641,1400,653,1397,665,1395,677,1383,689,1379,701,1381,713,1375,725,1358,737,1352,749,1340,761,1333,773,1327,785,1319,797,1323,809,1319,821,1315,833,1323,845,1336,857,1339,869,1345,881,1350,893,1355,905,1357,917,1362,929,1365,941,1364,953,1364,965,1362,977,1361,989,1358,1001,1353,1013,1348,1025,1345,1037,1341,1049,1338,1061,1337,1073,1335,1085,1336,1097,1333,1109,1330,1121,1330,1133,1317,1145,1290,1157,1272,1169,1260,1181,1252,1193,1244];
const ma20 = [17,1565,31,1565,44,1566,64,1570,89,1573,113,1572,125,1567,137,1557,149,1545,161,1533,173,1527,185,1525,197,1522,209,1521,221,1521,233,1519,245,1513,257,1508,269,1502,281,1492,293,1482,305,1478,317,1473,329,1467,341,1460,353,1453,365,1453,377,1455,389,1463,401,1471,413,1472,425,1472,437,1471,449,1467,461,1463,473,1464,485,1464,497,1463,509,1461,521,1459,533,1458,545,1457,557,1452,569,1449,581,1447,593,1443,605,1442,617,1437,629,1435,641,1433,653,1432,665,1427,677,1418,689,1415,701,1413,713,1403,725,1389,737,1382,749,1373,761,1367,773,1362,785,1357,797,1353,809,1349,821,1348,833,1348,845,1347,857,1346,869,1344,881,1343,893,1340,905,1337,917,1341,929,1341,941,1339,953,1343,965,1349,977,1351,989,1352,1001,1352,1013,1351,1025,1351,1037,1351,1049,1351,1061,1351,1073,1351,1085,1349,1097,1346,1109,1344,1121,1341,1133,1332,1145,1320,1157,1308,1169,1300,1181,1295,1193,1290];

function flatPath(points) {
  let d = "";
  for (let i = 0; i < points.length; i += 2) {
    d += (i ? "L" : "M") + points[i] + " " + points[i + 1];
  }
  return d;
}

function drawCandles() {
  let out = "";
  candles.forEach((c, i) => {
    const x = 17.3 + i * 12;
    const color = c[0] === "r" ? "#c8363a" : "#079a10";
    const bodyH = c[3] - c[2];
    if (c[1] < c[2]) out += `<path d="M${x} ${c[1]}V${c[2]}" stroke="${color}" stroke-width="2"/>`;
    if (c[4] > c[3]) out += `<path d="M${x} ${c[3]}V${c[4]}" stroke="${color}" stroke-width="2"/>`;
    if (c[0] === "r" && bodyH > 4) {
      out += `<rect x="${x - 4}" y="${c[2]}" width="8" height="${bodyH}" fill="#fff" stroke="${color}" stroke-width="2"/>`;
    } else {
      out += `<rect x="${x - 5}" y="${c[2]}" width="10" height="${Math.max(bodyH, 2)}" fill="${color}"/>`;
    }
  });
  document.getElementById("candles").innerHTML = out;
}

drawCandles();
document.getElementById("ma5").setAttribute("d", flatPath(ma5));
document.getElementById("ma10").setAttribute("d", flatPath(ma10));
document.getElementById("ma20").setAttribute("d", flatPath(ma20));

// Intraday price, first part read at 3x from x=280 y=1980, the rest in px of the 1.285/1.837 scale
const priceA = [35,185,45,105,55,170,70,295,80,255,93,305,105,295,115,135,125,225,140,270,155,295,172,345,182,355,195,338,205,352,225,318,235,315,255,345,265,355,275,378,295,378,310,422,330,367,345,375,367,252,378,290,400,282,415,322,425,330,437,302,455,352,470,332,495,352,515,345,530,368,540,372,552,400,573,365,583,382,595,372,610,390,630,387,650,400,662,378,680,405,700,392,720,402,742,415,755,405,775,425,810,425,822,418,835,423,855,410,875,425,900,445,925,445,940,428,950,432,965,448,1000,452,1025,430,1052,455,1070,447,1085,447,1100,427,1125,430,1165,423,1180,437,1220,450,1245,433,1280,449,1297,438,1320,440,1350,435,1395,415,1410,395,1428,380,1445,335,1452,332,1472,362,1488,338,1500,358];
const priceB = [1010,443,1030,458,1045,455,1060,462,1070,452,1085,462,1105,458,1125,465,1160,468,1175,458,1190,452,1203,438,1220,455,1230,453,1260,455,1280,462,1300,457,1330,462,1370,475,1395,490,1410,478,1420,490,1445,465,1460,480,1500,488,1520,480,1550,482];
const avgA = [55,135,100,185,130,192,160,200,185,218,210,225,260,232,290,240,320,250,365,255,520,258,560,263,690,272,780,280,880,285,1000,292,1200,297,1500,303];
const avgB = [1200,411,1400,414,1550,422];
const auction = [14,2222,61,2219,61,2213,85,2211,87,2176,92,2157,103,2157,105,2135,132,2131,134,2109,218,2108,220,2110,286,2109,288,2094];

function fromA(list) {
  return list.map((v, i) => (i % 2 ? 1980 + v / 3 : 280 + v / 3));
}

function fromB(list) {
  return list.map((v, i) => (i % 2 ? 1860 + v / 1.837 : v / 1.285));
}

document.getElementById("price-line").setAttribute("d", flatPath(fromA(priceA).concat(fromB(priceB))));
document.getElementById("avg-line").setAttribute("d", flatPath(fromA(avgA).concat(fromB(avgB))));
document.getElementById("auction-line").setAttribute("d", flatPath(auction));

// Volume bars, negative means a green bar
const volEarly = [-13,25,26,26,26,27,27,27,27,27,27,28,28,28,28,28,28,28,28,21,-21,21,21,20,20,20,19,19,19,19,16,16,16,16,16,16,16,16,16,-17,-17,17,17,18,18,18,19,19,19,22,23,-23,25,25,25,25,26,-27,-28,29,31,33,33,34,37,40,42,-44,52,62,-55,85,-36,-33,29,-19,36,19,-22,-7,-8,-10,-20,-28,9,-18,10,6,-6,6,7,-8,9,11,-15,-14,12,4,-4,8,8,5,-5,5,4,-3];
const hang = {8:1,10:2,11:2,12:3,13:3,14:3,15:4,16:6,17:6,18:6,22:1,27:1,31:2,33:2,40:1,44:1,49:1,52:2,60:3,62:3,64:3,65:3,67:2,68:5,69:3};

function drawVolume() {
  let out = "";
  const step = 3.97;
  const total = 301;
  for (let i = 0; i < total; i++) {
    const x = 13 + i * step;
    let v = volEarly[i];
    if (v === undefined) {
      const k = i - volEarly.length;
      const h = 2 + ((k * 7) % 5) * 0.5;
      v = (k * 3) % 11 < 3 ? -h : h;
      if (k === 70) v = 10;
      if (k === 71) v = -7;
      if (k === 190) v = 10;
      if (k === 193) v = 12;
    }
    const h = Math.abs(v);
    const color = v < 0 ? "#0a9a12" : "#e42c2c";
    const w = i < 110 ? 2.8 : 2.2;
    out += `<rect x="${x.toFixed(1)}" y="${2375 - h}" width="${w}" height="${h}" fill="${color}"/>`;
    if (hang[i]) out += `<rect x="${x.toFixed(1)}" y="2291" width="${w}" height="${hang[i]}" fill="#d8434a"/>`;
  }
  document.getElementById("vol-bars").innerHTML = out;
}

drawVolume();
```
